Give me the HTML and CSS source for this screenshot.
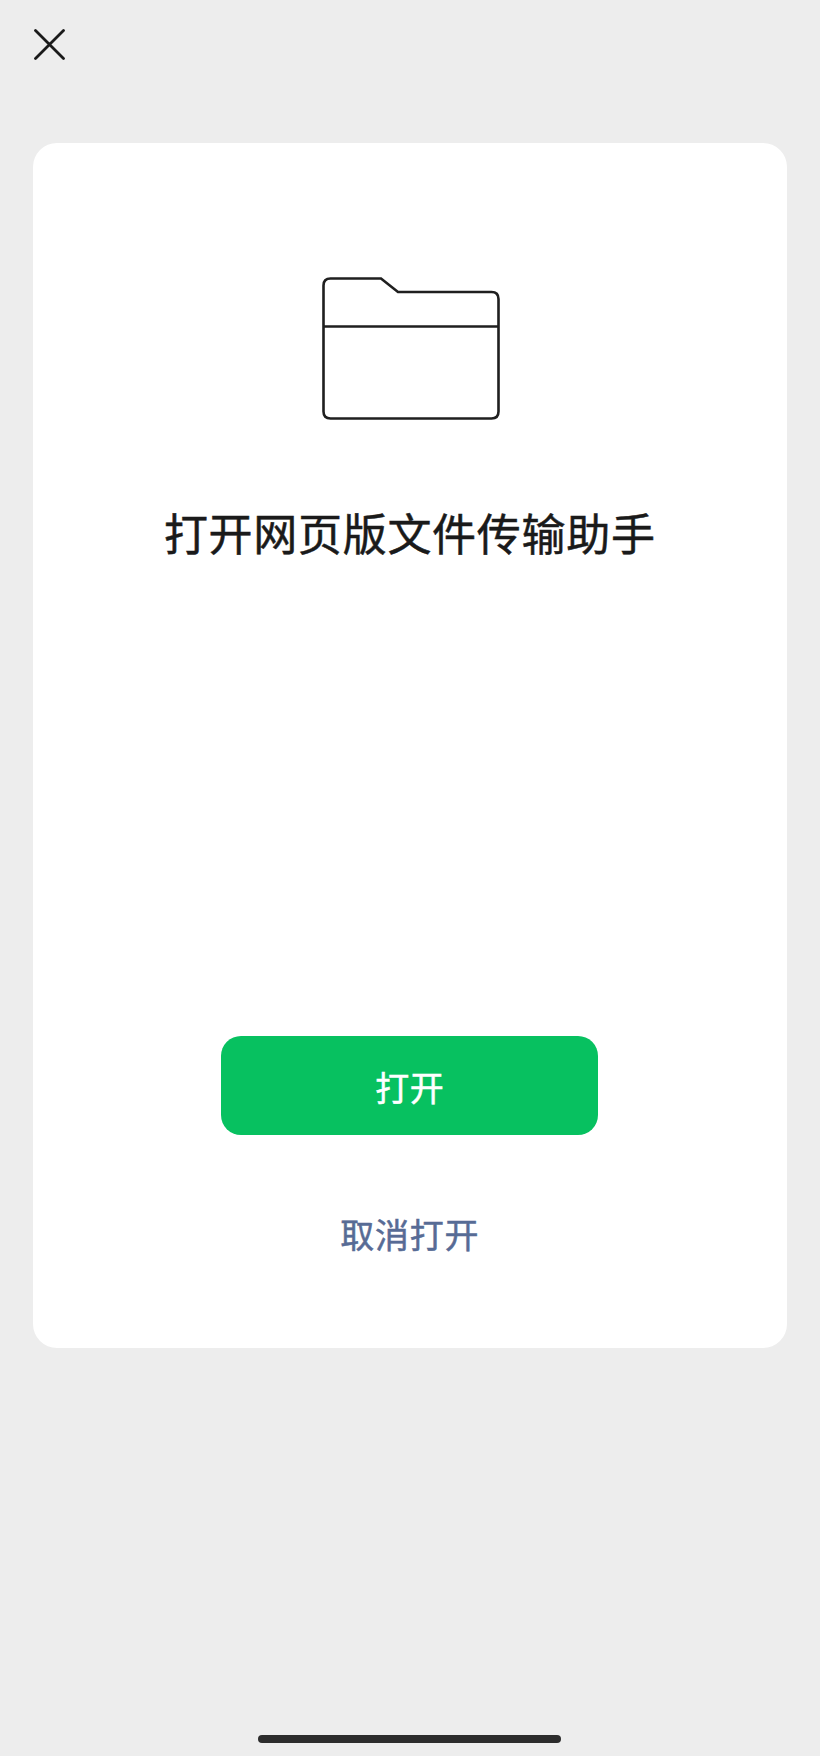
FILE: index.html
```html
<!DOCTYPE html>
<html lang="zh-CN">
<head>
  <meta charset="utf-8">
  <title>打开网页版文件传输助手</title>
  <link rel="stylesheet" href="styles.css">
</head>
<body>
  <div class="page">
    <header class="top-bar">
      <svg class="close-icon" width="31" height="31" viewBox="0 0 31 31">
        <path d="M1.5 1.5L29.5 29.500M29.500 1.500L1.500 29.500" />
      </svg>
    </header>

    <main class="card">
      <svg class="folder-icon" width="178" height="144" viewBox="0 0 178 144">
        <path d="M1.500 9.500Q1.500 2.500 8.500 2.500H59L76 16H169.500Q176.500 16 176.500 23V135.500Q176.500 142.500 169.500 142.500H8.500Q1.500 142.500 1.500 135.500ZM1.500 50.500H176.500" />
      </svg>
      <h1 class="title">打开网页版文件传输助手</h1>
      <button class="btn-open" type="button">打开</button>
      <a class="btn-cancel" href="#">取消打开</a>
    </main>

    <div class="home-bar"></div>
  </div>
</body>
</html>
```

FILE: styles.css
```css
body {
  margin: 0;
  background-color: #ededed;
  font-family: "Liberation Sans", "Noto Sans CJK SC", sans-serif;
}

.page {
  height: 1756px;
  display: flex;
  flex-direction: column;
  overflow: hidden;
}

.top-bar {
  display: flex;
  height: 143px;
  padding: 29px 0 0 34px;
  box-sizing: border-box;
}

.close-icon {
  fill: none;
  stroke: #1a1a1a;
  stroke-width: 2.8;
  stroke-linecap: round;
}

.card {
  height: 1205px;
  margin: 0 33px 0 32.500px;
  box-sizing: border-box;
  padding-top: 133px;
  background-color: #fff;
  border-radius: 24px;
  display: flex;
  flex-direction: column;
  align-items: center;
}

.folder-icon {
  margin-left: 2px;
  fill: none;
  stroke: #1f1f1f;
  stroke-width: 2.6;
}

.title {
  margin: 84px 0 0;
  font-size: 44px;
  line-height: 64px;
  font-weight: 400;
  -webkit-text-stroke: 0.5px #1a1a1a;
  letter-spacing: 0.7px;
  color: #1a1a1a;
}

.btn-open {
  width: 377px;
  height: 99px;
  margin-top: 468px;
  padding: 2px 0 0;
  border: none;
  border-radius: 20px;
  background-color: #07c160;
  color: #fff;
  font-family: inherit;
  font-size: 34px;
  font-weight: 400;
  -webkit-text-stroke: 0.5px #fff;
  letter-spacing: 0.5px;
  cursor: pointer;
}

.btn-cancel {
  margin-top: 76px;
  font-size: 34px;
  line-height: 50px;
  letter-spacing: 0.8px;
  font-weight: 400;
  -webkit-text-stroke: 0.5px #576b95;
  color: #576b95;
  text-decoration: none;
}

.home-bar {
  width: 303px;
  height: 8px;
  margin: auto auto 13px 258px;
  border-radius: 4px;
  background-color: #2c2c2c;
}
```
